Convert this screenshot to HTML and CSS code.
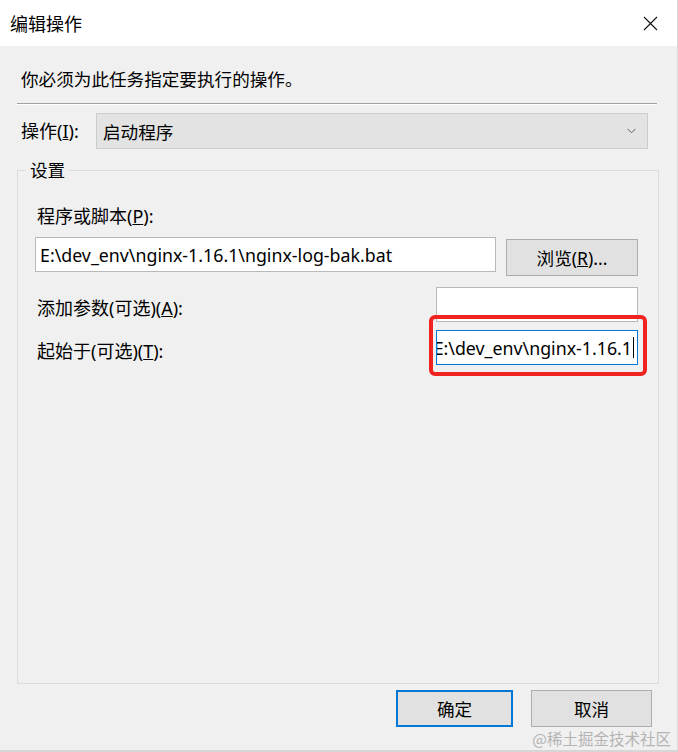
FILE: index.html
```html
<!DOCTYPE html>
<html lang="zh-CN">
<head>
    <meta charset="UTF-8">
    <meta name="viewport" content="width=device-width, initial-scale=1.0">
    <title>编辑操作</title>
    <link rel="stylesheet" href="styles.css">
</head>
<body>
    <div class="dialog">
        <header class="titlebar">
            <span class="title">编辑操作</span>
            <svg class="close" width="15" height="15" viewBox="0 0 15 15">
                <path d="M1 1 L14 14 M14 1 L1 14" stroke="#111" stroke-width="1.1" fill="none"/>
            </svg>
        </header>

        <main class="content">
            <p class="intro">你必须为此任务指定要执行的操作。</p>
            <div class="sep"></div>

            <div class="action-row">
                <span class="lbl">操作(<u>I</u>):</span>
                <div class="select">
                    <span>启动程序</span>
                    <svg class="chev" width="9" height="6" viewBox="0 0 9 6">
                        <path d="M0.5 0.8 L4.5 4.8 L8.5 0.8" stroke="#606060" stroke-width="1" fill="none"/>
                    </svg>
                </div>
            </div>

            <fieldset class="group">
                <legend>设置</legend>
                <div class="lbl prog-lbl">程序或脚本(<u>P</u>):</div>
                <div class="path-row">
                    <div class="input">E:\dev_env\nginx-1.16.1\nginx-log-bak.bat</div>
                    <button class="btn browse">浏览(<u>R</u>)...</button>
                </div>
                <div class="field-row">
                    <span class="lbl">添加参数(可选)(<u>A</u>):</span>
                    <div class="input short"></div>
                </div>
                <div class="field-row">
                    <span class="lbl">起始于(可选)(<u>T</u>):</span>
                    <div class="start-wrap">
                        <div class="input short focused">
                            <span class="val">E:\dev_env\nginx-1.16.1</span><span class="caret"></span>
                        </div>
                        <div class="mark"></div>
                    </div>
                </div>
            </fieldset>

            <div class="actions">
                <button class="btn ok">确定</button>
                <button class="btn cancel">取消</button>
            </div>
        </main>

        <div class="watermark">@稀土掘金技术社区</div>
    </div>
</body>
</html>
```

FILE: styles.css
```css
/* Ventana de diálogo estilo Windows */
body {
    margin: 0;
    background: #f0f0f0;
    font-family: "Noto Sans", "Noto Sans CJK SC", sans-serif;
    color: #000;
    overflow: hidden;
}

.dialog {
    position: relative;
    width: 678px;
    height: 752px;
    box-sizing: border-box;
    border-bottom: 2px solid #d6d6d6;
    border-right: 1px solid #dcdcdc;
}

.titlebar {
    height: 46px;
    background: #fff;
    display: flex;
    align-items: center;
    justify-content: space-between;
    padding: 0 19px 0 10px;
    box-sizing: border-box;
}

.title {
    font-family: "Noto Sans CJK SC", sans-serif;
    font-size: 18px;
    line-height: 22px;
}

.content {
    height: 704px;
    box-sizing: border-box;
    padding: 0 18px 23px 17px;
    display: flex;
    flex-direction: column;
}

.lbl {
    font-size: 18px;
    line-height: 20px;
    white-space: nowrap;
}

.intro {
    margin: 23px 0 0 4px;
    font-size: 17.6px;
    line-height: 20px;
}

.sep {
    margin-top: 14px;
    margin-right: 2px;
    border-top: 1px solid #a0a0a0;
    border-bottom: 1px solid #ffffff;
}

.action-row {
    margin-top: 8px;
    display: flex;
    align-items: center;
    padding-left: 4px;
}

.action-row .lbl {
    width: 75px;
}

.select {
    flex: 1;
    margin-right: 11px;
    height: 36px;
    box-sizing: border-box;
    background: #e3e3e3;
    border: 1px solid #cccccc;
    display: flex;
    align-items: center;
    justify-content: space-between;
    padding: 0 11px 0 6px;
    font-size: 17.6px;
}

/* Grupo "设置" */
.group {
    flex: 1;
    margin: 11px 0 0 0;
    padding: 0 20px 0 17px;
    border: 1px solid #dcdcdc;
    min-width: 0;
}

.group legend {
    margin-left: -9px;
    padding: 0 4px;
    font-size: 17.6px;
    line-height: 20px;
}

.prog-lbl {
    margin-top: 26px;
    padding-left: 2px;
}

.path-row {
    margin-top: 11px;
    display: flex;
    align-items: flex-start;
    gap: 10px;
}

.input {
    height: 35px;
    box-sizing: border-box;
    background: #fff;
    border: 1px solid #b8b8b8;
    padding: 0 4px;
    display: flex;
    align-items: center;
    font-size: 17.8px;
    white-space: nowrap;
    overflow: hidden;
}

.path-row .input {
    flex: 1;
}

.btn {
    font-family: "Noto Sans", "Noto Sans CJK SC", sans-serif;
    font-size: 17.6px;
    background: #e1e1e1;
    border: 1px solid #adadad;
    color: #000;
    padding: 0;
    height: 37px;
}

.browse {
    width: 132px;
    margin-top: 2px;
}

.field-row {
    margin-top: 11px;
    display: flex;
    justify-content: space-between;
    align-items: flex-start;
}

.field-row + .field-row {
    margin-top: 8px;
}

.field-row .lbl {
    padding: 11px 0 0 2px;
}

.short {
    width: 202px;
}

.start-wrap {
    position: relative;
}

.focused {
    border-color: #0078d7;
    justify-content: flex-end;
    padding: 0 3px 0 0;
}

.val {
    flex: none;
}

.caret {
    flex: none;
    width: 1px;
    height: 21px;
    margin-left: 1px;
    background: #000;
}

/* Recuadro rojo de anotación */
.mark {
    position: absolute;
    top: -15px;
    left: -7px;
    right: -9px;
    bottom: -11px;
    border: 4px solid #f0231f;
    border-radius: 6px;
}

.actions {
    margin-top: 6px;
    margin-right: 7px;
    display: flex;
    justify-content: flex-end;
    gap: 18px;
}

.ok {
    width: 117px;
    border: 2px solid #0078d7;
}

.cancel {
    width: 121px;
}

.watermark {
    position: absolute;
    right: 6px;
    bottom: 2px;
    font-family: "Noto Sans CJK SC", sans-serif;
    font-size: 15.5px;
    line-height: 19px;
    color: #b4b4b4;
}
```
